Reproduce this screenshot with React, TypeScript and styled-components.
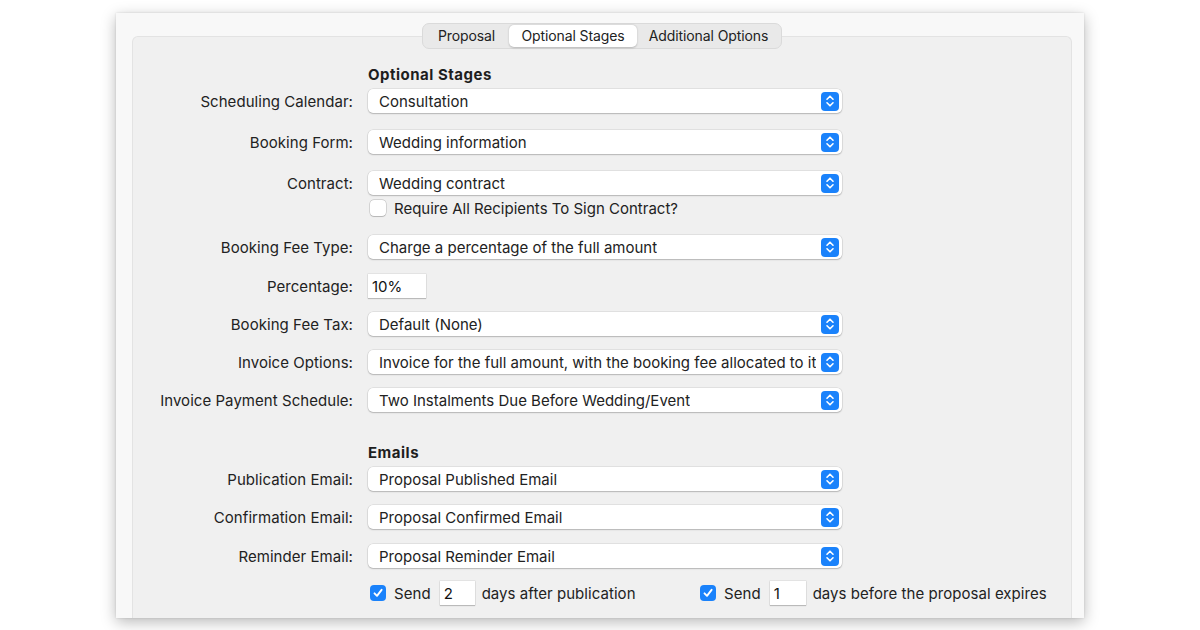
import React from "react";
import styled, { createGlobalStyle } from "styled-components";

const Global = createGlobalStyle`
  html, body { margin: 0; padding: 0; background: #ffffff; }
  body { font-family: Inter, "Liberation Sans", sans-serif; color: #222; -webkit-font-smoothing: antialiased; }
`;

const Page = styled.div`
  width: 1200px;
  height: 630px;
  overflow: hidden;
  padding-top: 13px;
  box-sizing: border-box;
`;

const Window = styled.div`
  margin-left: 116px;
  width: 968px;
  height: 605px;
  background: #f8f8f8;
  box-shadow: 0 4px 14px rgba(0, 0, 0, 0.28), 0 0 2px rgba(0, 0, 0, 0.12);
  padding: 10px 12px 0 16px;
  box-sizing: border-box;
  display: flex;
  flex-direction: column;
`;

const TabBar = styled.div`
  align-self: flex-start;
  margin-left: 290px;
  display: flex;
  height: 26px;
  background: #e9e9e9;
  border: 1px solid #dadada;
  border-radius: 7px;
  box-sizing: border-box;
  position: relative;
  z-index: 1;
  padding: 1px;
`;

const Tab = styled.div<{ $active?: boolean; $w: number }>`
  display: flex;
  align-items: center;
  justify-content: center;
  width: ${(p) => p.$w}px;
  padding-bottom: 2px;
  box-sizing: border-box;
  font-size: 14px;
  letter-spacing: -0.1px;
  color: #222;
  border-radius: 5px;
  background: ${(p) => (p.$active ? "#ffffff" : "transparent")};
  box-shadow: ${(p) => (p.$active ? "0 0.5px 2px rgba(0,0,0,0.22)" : "none")};
`;

const Group = styled.div`
  margin-top: -13px;
  flex: 1;
  background: #f0f0f0;
  border: 1px solid #e3e3e3;
  border-bottom: none;
  border-radius: 6px 6px 0 0;
  padding-top: 25px;
  box-sizing: border-box;
  display: flex;
  flex-direction: column;
`;

const Row = styled.div<{ $mt: number }>`
  display: grid;
  grid-template-columns: 220px 1fr;
  column-gap: 15px;
  align-items: center;
  margin-top: ${(p) => p.$mt}px;
  min-height: 24px;
`;

const Label = styled.div`
  text-align: right;
  font-size: 15px;
  color: #222;
  letter-spacing: 0.05px;
`;

const Heading = styled.div`
  font-size: 15px;
  font-weight: 700;
  color: #1e1e1e;
  letter-spacing: 0.5px;
`;

const Popup = styled.div`
  width: 474px;
  height: 24px;
  box-sizing: border-box;
  background: #ffffff;
  border-radius: 5px;
  box-shadow: 0 0 0 0.5px rgba(0, 0, 0, 0.12), 0 1px 1.5px rgba(0, 0, 0, 0.2);
  display: flex;
  align-items: center;
  justify-content: space-between;
  padding: 0 3px 0 11px;
  font-size: 15px;
  color: #222;
  letter-spacing: 0;
`;

const PopupText = styled.span`
  white-space: nowrap;
  overflow: hidden;
`;

const Stepper = styled.div`
  width: 18px;
  height: 19px;
  flex: none;
  background: #1a82fb;
  border-radius: 4px;
  display: flex;
  align-items: center;
  justify-content: center;
`;

const Field = styled.div<{ $w: number }>`
  width: ${(p) => p.$w}px;
  height: 24px;
  box-sizing: border-box;
  background: #ffffff;
  box-shadow: 0 0 0 0.5px rgba(0, 0, 0, 0.1), 0 1px 1px rgba(0, 0, 0, 0.18);
  display: flex;
  align-items: center;
  padding-left: 4px;
  font-size: 15px;
  color: #111;
`;

const CheckLine = styled.div`
  display: flex;
  align-items: center;
  font-size: 15px;
  color: #222;
  letter-spacing: 0;
`;

const Box = styled.div<{ $on?: boolean }>`
  width: 16px;
  height: 16px;
  box-sizing: border-box;
  border-radius: 4px;
  margin-left: 2px;
  margin-right: 8px;
  flex: none;
  background: ${(p) => (p.$on ? "#1a82fb" : "#ffffff")};
  box-shadow: ${(p) =>
    p.$on ? "none" : "0 0 0 0.5px rgba(0,0,0,0.22), 0 0.5px 1px rgba(0,0,0,0.15)"};
  display: flex;
  align-items: center;
  justify-content: center;
`;

const SendGroup = styled.div<{ $w?: number }>`
  display: flex;
  align-items: center;
  width: ${(p) => (p.$w ? `${p.$w}px` : "auto")};
`;

const Word = styled.span<{ $ml?: number; $mr?: number }>`
  margin-left: ${(p) => p.$ml ?? 0}px;
  margin-right: ${(p) => p.$mr ?? 0}px;
  white-space: nowrap;
`;

const SendRow = styled.div`
  display: flex;
  align-items: center;
  font-size: 15px;
  color: #222;
  letter-spacing: 0.05px;
`;

const StepIcon = () => (
  <Stepper>
    <svg width="10" height="14" viewBox="0 0 10 14" fill="none">
      <path d="M2 5.2 L5 2.2 L8 5.2" stroke="#fff" strokeWidth="1.6" strokeLinecap="round" strokeLinejoin="round" />
      <path d="M2 8.8 L5 11.8 L8 8.8" stroke="#fff" strokeWidth="1.6" strokeLinecap="round" strokeLinejoin="round" />
    </svg>
  </Stepper>
);

const Check = () => (
  <svg width="12" height="12" viewBox="0 0 12 12" fill="none">
    <path d="M2.5 6.3 L5 8.8 L9.6 2.8" stroke="#fff" strokeWidth="1.9" strokeLinecap="round" strokeLinejoin="round" />
  </svg>
);

const PopupRow = ({ mt, label, value }: { mt: number; label: string; value: string }) => (
  <Row $mt={mt}>
    <Label>{label}</Label>
    <Popup>
      <PopupText>{value}</PopupText>
      <StepIcon />
    </Popup>
  </Row>
);

export default function App() {
  return (
    <Page>
      <Global />
      <Window>
        <TabBar>
          <Tab $w={85}>Proposal</Tab>
          <Tab $w={128} $active>Optional Stages</Tab>
          <Tab $w={143}>Additional Options</Tab>
        </TabBar>
        <Group>
          <Row $mt={0}>
            <span />
            <Heading>Optional Stages</Heading>
          </Row>
          <PopupRow mt={3} label="Scheduling Calendar:" value="Consultation" />
          <PopupRow mt={17} label="Booking Form:" value="Wedding information" />
          <PopupRow mt={17} label="Contract:" value="Wedding contract" />
          <Row $mt={1}>
            <span />
            <CheckLine>
              <Box />
              Require All Recipients To Sign Contract?
            </CheckLine>
          </Row>
          <PopupRow mt={15} label="Booking Fee Type:" value="Charge a percentage of the full amount" />
          <Row $mt={15}>
            <Label>Percentage:</Label>
            <Field $w={58}>10%</Field>
          </Row>
          <PopupRow mt={14} label="Booking Fee Tax:" value="Default (None)" />
          <PopupRow mt={14} label="Invoice Options:" value="Invoice for the full amount, with the booking fee allocated to it" />
          <PopupRow mt={14} label="Invoice Payment Schedule:" value="Two Instalments Due Before Wedding/Event" />
          <Row $mt={28}>
            <span />
            <Heading>Emails</Heading>
          </Row>
          <PopupRow mt={3} label="Publication Email:" value="Proposal Published Email" />
          <PopupRow mt={14} label="Confirmation Email:" value="Proposal Confirmed Email" />
          <PopupRow mt={15} label="Reminder Email:" value="Proposal Reminder Email" />
          <Row $mt={13}>
            <span />
            <SendRow>
              <SendGroup $w={330}>
                <Box $on>
                  <Check />
                </Box>
                <Word $mr={9}>Send</Word>
                <Field $w={35}>2</Field>
                <Word $ml={7}>days after publication</Word>
              </SendGroup>
              <SendGroup>
                <Box $on>
                  <Check />
                </Box>
                <Word $mr={9}>Send</Word>
                <Field $w={36}>1</Field>
                <Word $ml={7}>days before the proposal expires</Word>
              </SendGroup>
            </SendRow>
          </Row>
        </Group>
      </Window>
    </Page>
  );
}
